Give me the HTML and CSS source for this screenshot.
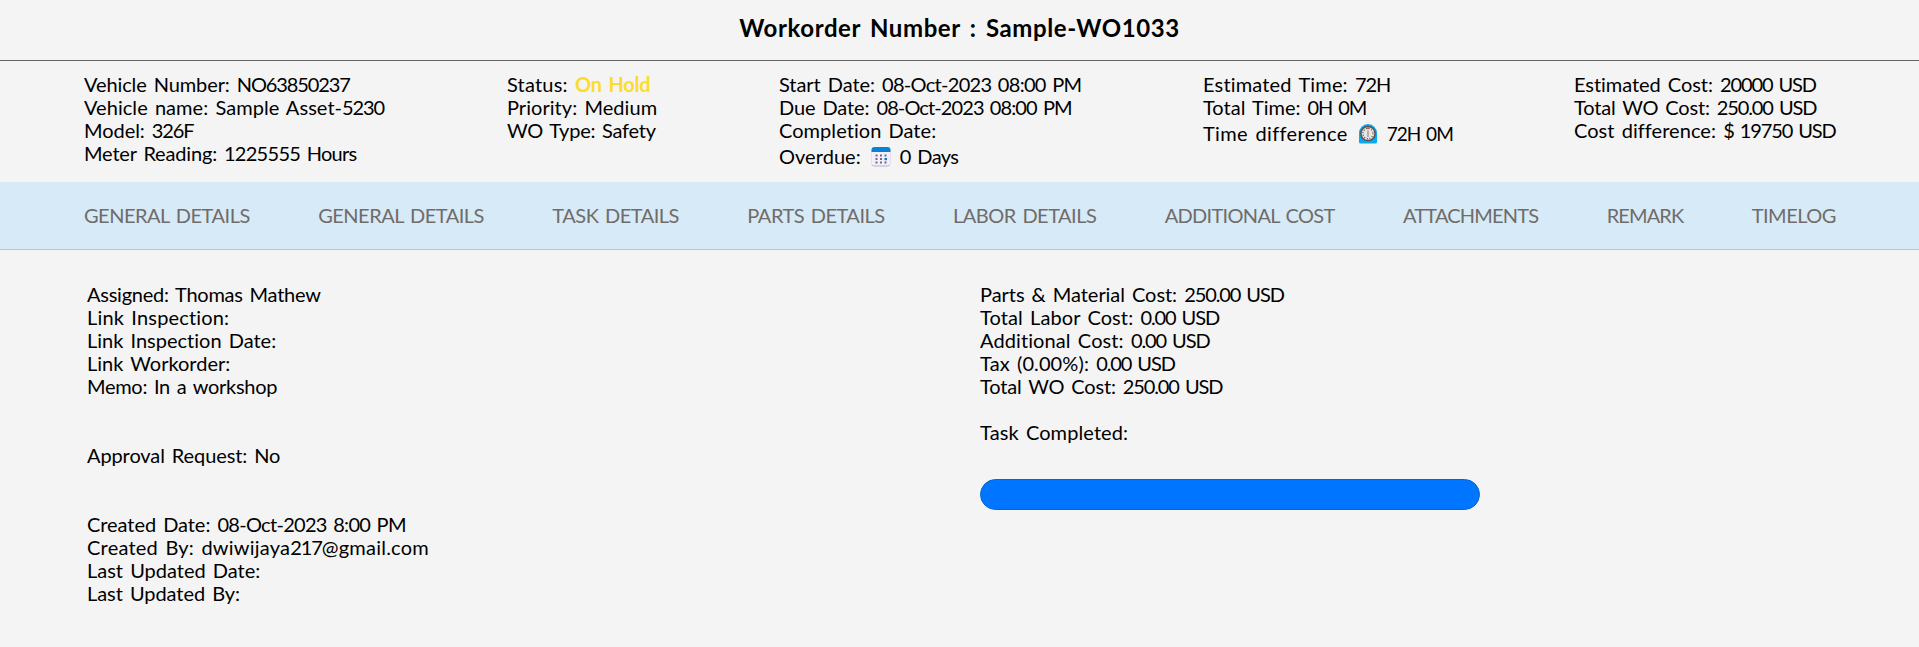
FILE: index.html
```
<!DOCTYPE html>
<html lang="en">
<head>
<meta charset="utf-8">
<title>Workorder Number : Sample-WO1033</title>
<link rel="stylesheet" href="styles.css">
</head>
<body>
<header class="title-bar"><h1 class="title">Workorder Number : Sample-WO1033</h1></header>
<section class="summary">
  <div class="group">
    <div class="line tn10">Vehicle Number: <span class="num">NO63850237</span></div>
    <div class="line tp05">Vehicle name: Sample Asset-<span class="num">5230</span></div>
    <div class="line tn05">Model: <span class="num">326F</span></div>
    <div class="line tn17">Meter Reading: <span class="date">1225555 Hours</span></div>
  </div>
  <div class="group">
    <div class="line"><span class="tp20">Status: </span><span class="on-hold">On Hold</span></div>
    <div class="line tp05">Priority: Medium</div>
    <div class="line tn25">WO Type: Safety</div>
  </div>
  <div class="group">
    <div class="line tn05">Start Date: <span class="date">08-Oct-2023 08:00 PM</span></div>
    <div class="line tn10">Due Date: <span class="date due">08-Oct-2023 08:00 PM</span></div>
    <div class="line tp05">Completion Date:</div>
    <div class="line icon-line">
      <span class="tp05">Overdue:</span>
      <svg class="icon" width="20" height="20" viewBox="0 0 20 20"><rect x=".5" y="1" width="19" height="18.500" rx="3.500" fill="#b9aec8"/><path d="M.5 4h19v11.500a3 3 0 0 1-3 3h-13a3 3 0 0 1-3-3z" fill="#f5effb"/><path d="M.5 5V3a3 3 0 0 1 3-3h13a3 3 0 0 1 3 3v2z" fill="#0883d3"/><path d="M4.500 7.500h2v2h-2zM9 7.500h2v2H9zM13.500 7.500h2v2h-2zM4.500 11h2v2h-2zM9 11h2v2H9zM4.500 14.500h2v2h-2zM9 14.500h2v2H9zM13.500 14.500h2v2h-2z" fill="#75668a"/><path d="M13.500 11h2.500v2.200h-2.500z" fill="#0078d4"/></svg>
      <span class="tn60">0 Days</span>
    </div>
  </div>
  <div class="group">
    <div class="line tp17">Estimated Time: <span class="num">72H</span></div>
    <div class="line">Total Time: <span class="num">0H 0M</span></div>
    <div class="line icon-line">
      <span class="tp35">Time difference</span>
      <svg class="icon" width="20" height="20" viewBox="0 0 20 20"><path d="M1 9a9 9 0 0 1 18 0v9a1.500 1.500 0 0 1-1.500 1.500h-15A1.500 1.500 0 0 1 1 18z" fill="#09a8f0"/><circle cx="10" cy="9.500" r="7.100" fill="#e8e6e4" stroke="#5b514b" stroke-width="1.500"/><circle cx="10" cy="9.500" r="5.100" fill="none" stroke="#4a4a4a" stroke-width="1.200" stroke-dasharray="1 1.670"/><path d="M10 6.500v6.500" stroke="#8d8988" stroke-width="1.200"/><circle cx="10" cy="4.300" r="1" fill="#e0413b"/></svg>
      <span class="hours">72H 0M</span>
    </div>
  </div>
  <div class="group">
    <div class="line tn05">Estimated Cost: <span class="num">20000 USD</span></div>
    <div class="line tn17">Total WO Cost: <span class="num">250.00 USD</span></div>
    <div class="line tp05">Cost difference: <span class="num">$ 19750 USD</span></div>
  </div>
</section>
<nav class="tabs">
  <a class="tn50">GENERAL DETAILS</a>
  <a class="tn50">GENERAL DETAILS</a>
  <a class="tn50">TASK DETAILS</a>
  <a class="tn50">PARTS DETAILS</a>
  <a class="tn50">LABOR DETAILS</a>
  <a class="tn70">ADDITIONAL COST</a>
  <a class="tn80">ATTACHMENTS</a>
  <a class="tn90">REMARK</a>
  <a class="tn50">TIMELOG</a>
</nav>
<main class="details">
  <section class="people">
    <div class="block">
      <div class="line tn25">Assigned: Thomas Mathew</div>
      <div class="line tp17">Link Inspection:</div>
      <div class="line">Link Inspection Date:</div>
      <div class="line">Link Workorder:</div>
      <div class="line tn30">Memo: In a workshop</div>
    </div>
    <div class="block">
      <div class="line tn10">Approval Request: No</div>
    </div>
    <div class="block">
      <div class="line tn05">Created Date: <span class="date">08-Oct-2023 8:00 PM</span></div>
      <div class="line tp23">Created By: dwiwijaya<span class="num">217</span>@gmail.com</div>
      <div class="line">Last Updated Date:</div>
      <div class="line tn05">Last Updated By:</div>
    </div>
  </section>
  <section class="costs">
    <div class="line tn05">Parts &amp; Material Cost: <span class="num">250.00 USD</span></div>
    <div class="line tp10">Total Labor Cost: <span class="num">0.00 USD</span></div>
    <div class="line tp10">Additional Cost: <span class="num">0.00 USD</span></div>
    <div class="line tp10">Tax (0.00%): <span class="num">0.00 USD</span></div>
    <div class="line tn17">Total WO Cost: <span class="num">250.00 USD</span></div>
    <div class="line task tp10">Task Completed:</div>
    <div class="progress"></div>
  </section>
</main>
</body>
</html>
```
FILE: styles.css
```
* { box-sizing: border-box; }
body {
  margin: 0;
  background: #f4f4f4;
  color: #000;
  font: 20px/23px Lato, "Trebuchet MS", sans-serif;
  font-variant-ligatures: none;
  word-spacing: 2px;
}
.title-bar {
  height: 61px;
  padding-top: 14px;
  border-bottom: 1px solid #666;
  text-align: center;
}
.title {
  margin: 0;
  font-size: 24px;
  line-height: 28px;
  font-weight: 700;
  letter-spacing: .59px;
  word-spacing: 3px;
}
.summary {
  display: grid;
  grid-template-columns: 423px 272px 424px 371px auto;
  height: 121px;
  padding: 12px 0 0 84px;
}
.line { white-space: pre; height: 23px; }
.num { letter-spacing: -1.1px; }
.date { letter-spacing: -.7px; }
.due { letter-spacing: -.9px; }
.hours { font-size: 19px; letter-spacing: -1px; }
.on-hold { color: #fcdc2c; font-weight: 700; letter-spacing: -.25px; }
.icon-line { display: flex; align-items: flex-end; height: 26px; }
.icon { flex: none; margin: 0 9px 1px 10px; }
.tabs {
  display: flex;
  justify-content: space-between;
  height: 68px;
  padding: 22px 83px 0 84px;
  background: #d7eaf8;
  border-bottom: 1px solid #bcc5cb;
  color: #706c68;
}
.details {
  display: grid;
  grid-template-columns: 893px auto;
  padding: 33px 0 0 87px;
}
.people { display: flex; flex-direction: column; gap: 46px; }
.task { margin-top: 23px; }
.progress {
  width: 500px;
  height: 31px;
  margin-top: 35px;
  border: 1px solid #0069d1;
  border-radius: 16px;
  background: #0075ff;
}
/* tracking: tn = negative, tp = positive, hundredths of a pixel */
.tn90 { letter-spacing: -.9px; }
.tn80 { letter-spacing: -.8px; }
.tn70 { letter-spacing: -.7px; }
.tn60 { letter-spacing: -.6px; }
.tn50 { letter-spacing: -.5px; }
.tn30 { letter-spacing: -.3px; }
.tn25 { letter-spacing: -.25px; }
.tn17 { letter-spacing: -.17px; }
.tn10 { letter-spacing: -.1px; }
.tn05 { letter-spacing: -.05px; }
.tp05 { letter-spacing: .05px; }
.tp10 { letter-spacing: .1px; }
.tp17 { letter-spacing: .17px; }
.tp20 { letter-spacing: .2px; }
.tp23 { letter-spacing: .23px; }
.tp35 { letter-spacing: .35px; }
```
